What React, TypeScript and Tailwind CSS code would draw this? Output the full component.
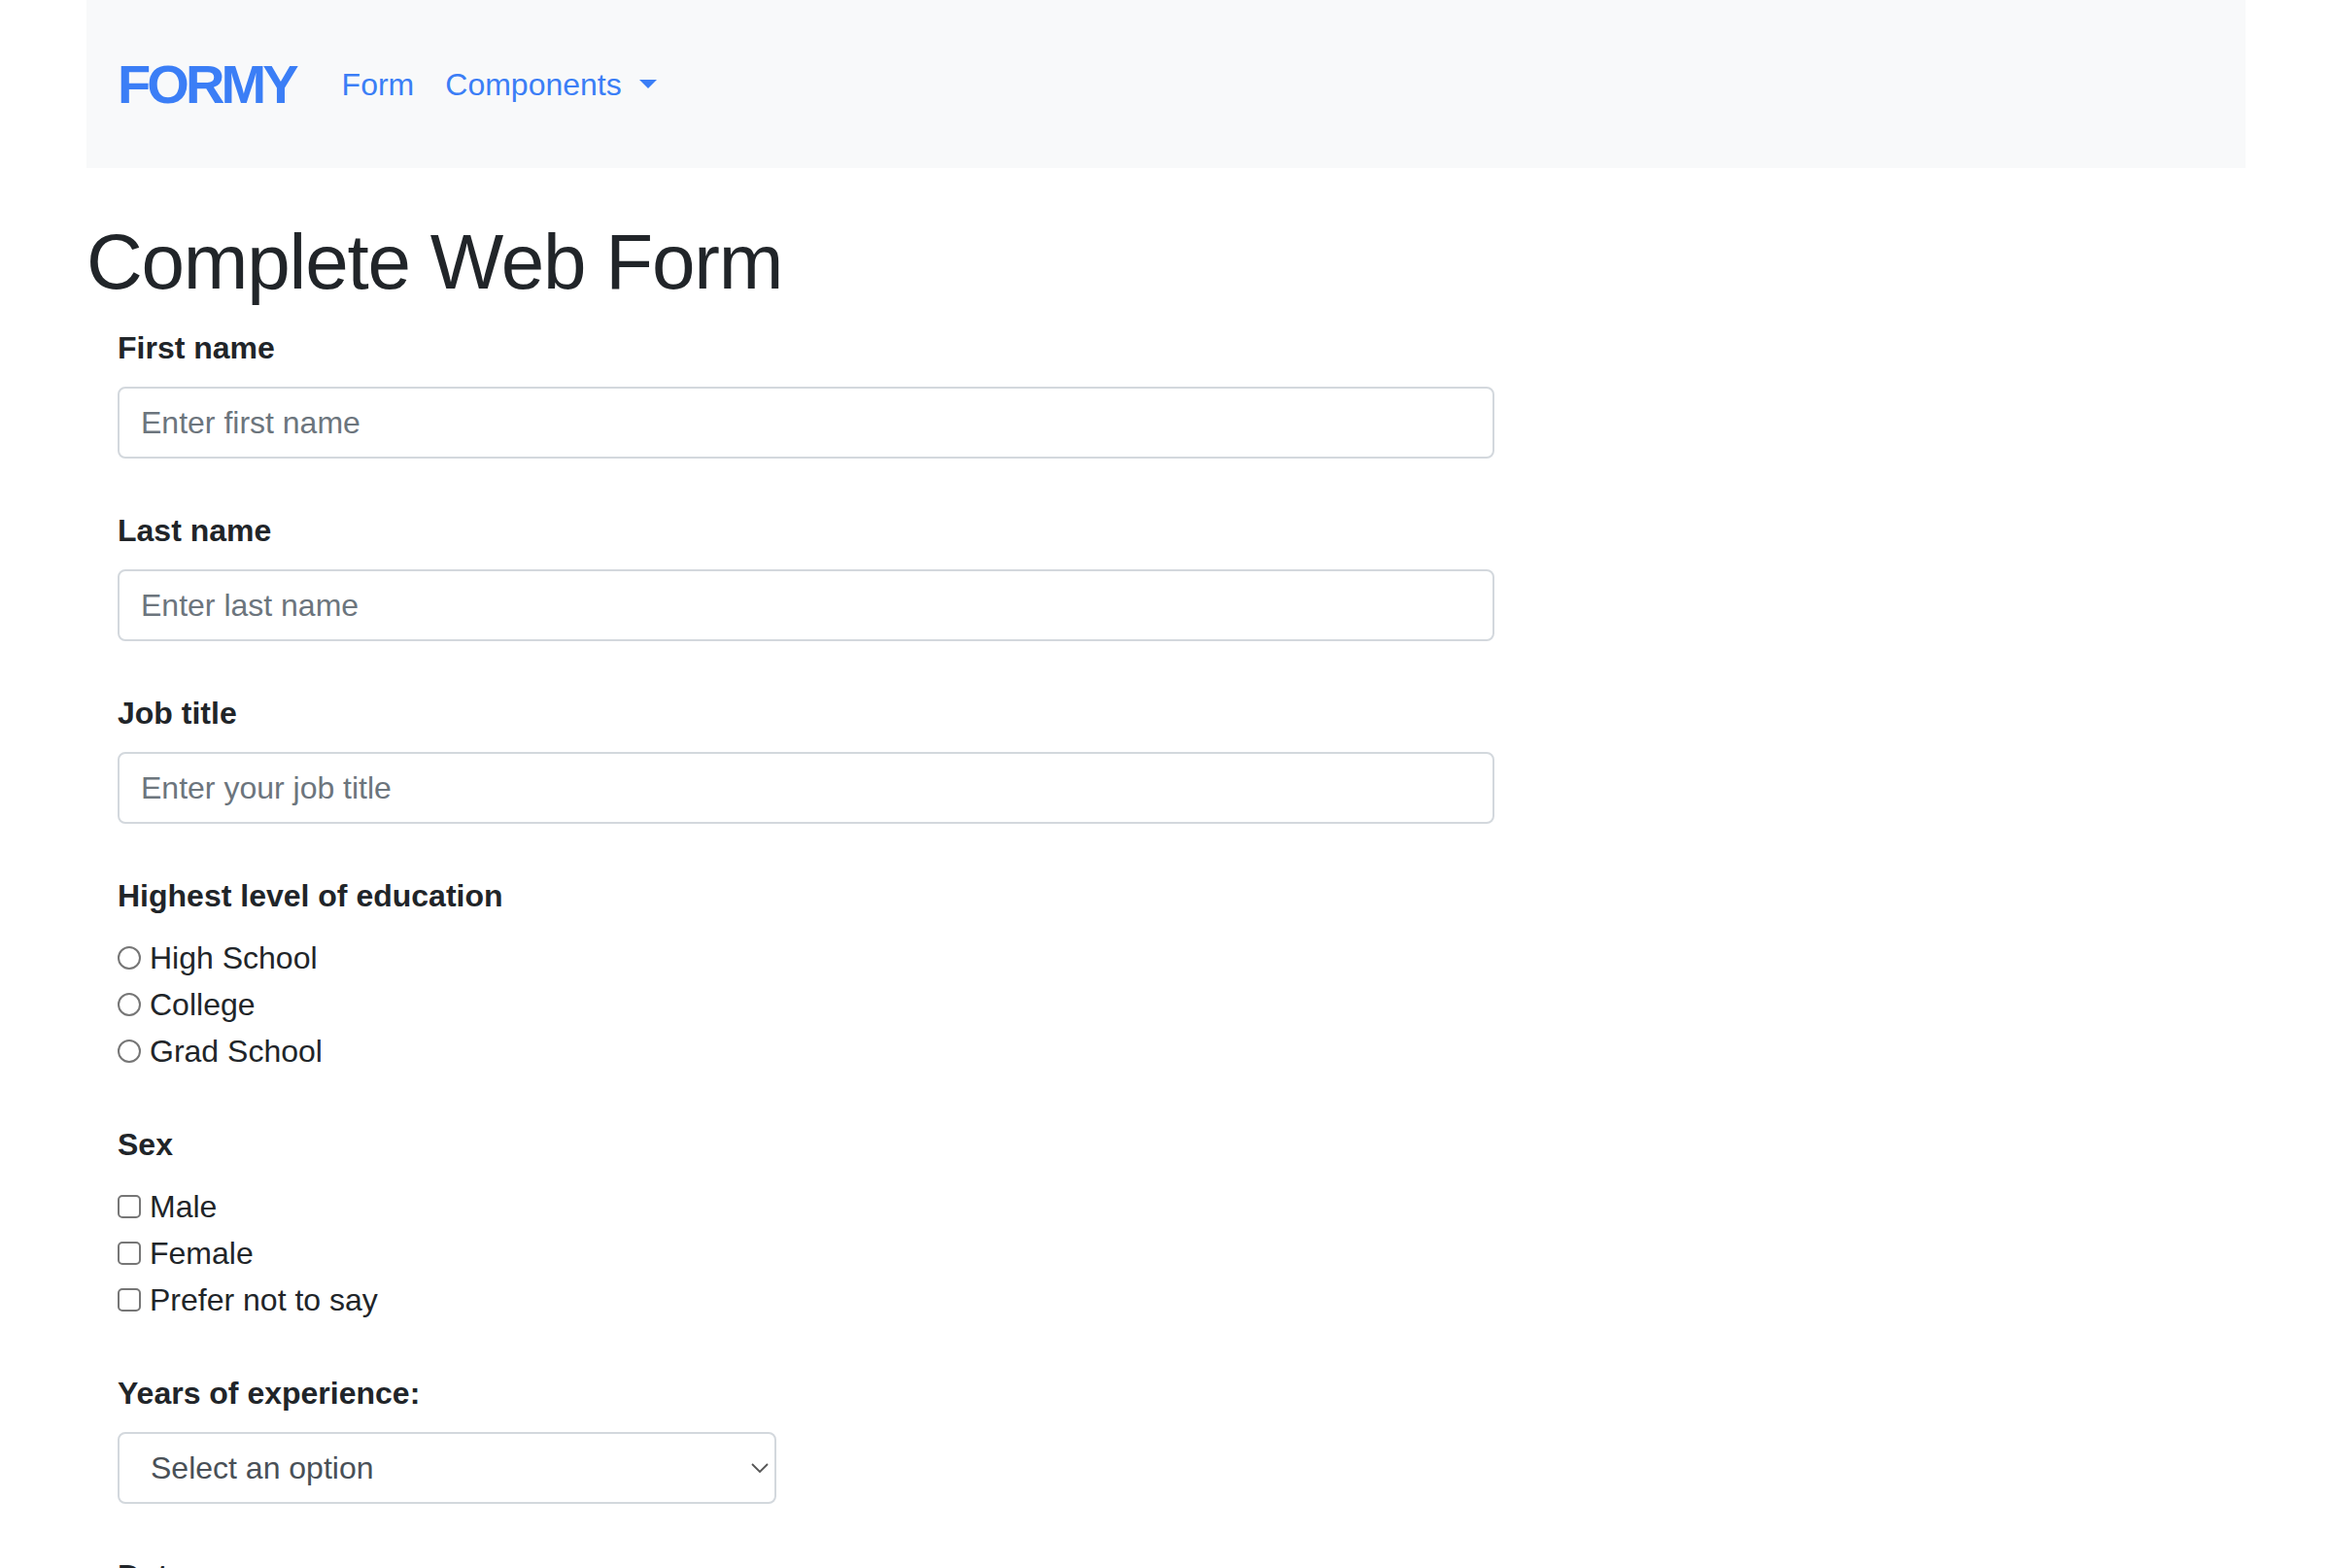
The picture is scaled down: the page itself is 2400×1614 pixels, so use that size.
const textInputs = [
  { id: 'first-name', label: 'First name', placeholder: 'Enter first name' },
  { id: 'last-name', label: 'Last name', placeholder: 'Enter last name' },
  { id: 'job-title', label: 'Job title', placeholder: 'Enter your job title' },
];

const education = ['High School', 'College', 'Grad School'];
const sexOptions = ['Male', 'Female', 'Prefer not to say'];

function Navbar() {
  return (
    <nav className="flex h-[173px] items-center bg-[#f8f9fa] px-[32px]">
      <a className="mr-[32px] text-[56px] font-bold leading-[1.5] tracking-[-0.07em] text-[#3b7ef6]">
        FORMY
      </a>
      <a className="px-[16px] text-[32px] leading-[1.5] text-[#3b7ef6]">Form</a>
      <a className="flex items-center px-[16px] text-[32px] leading-[1.5] text-[#3b7ef6]">
        Components
        <span className="ml-[18px] h-0 w-0 border-x-[9px] border-t-[9px] border-x-transparent border-t-[#3b7ef6]" />
      </a>
    </nav>
  );
}

function Label({ children }: { children: React.ReactNode }) {
  return (
    <label className="mb-[16px] block text-[32px] font-bold leading-[48px] text-[#212529]">
      {children}
    </label>
  );
}

export default function App() {
  return (
    <div className="min-h-screen bg-white px-[89px] font-['Liberation_Sans',Arial,sans-serif] text-[#212529]">
      <Navbar />

      <h1 className="mt-[49px] mb-[16px] text-[80px] font-medium leading-[1.2] tracking-[-0.015em]">
        Complete Web Form
      </h1>

      <form className="pl-[32px]">
        {textInputs.map((field) => (
          <div key={field.id} className="mb-[50px]">
            <Label>{field.label}</Label>
            <input
              id={field.id}
              type="text"
              placeholder={field.placeholder}
              className="block h-[74px] w-[1417px] rounded-[8px] border-2 border-[#d3d8dd] bg-white pl-[22px] text-[32px] text-[#495057] outline-none placeholder:text-[#6c757d]"
            />
          </div>
        ))}

        <div className="mb-[48px]">
          <Label>Highest level of education</Label>
          {education.map((item) => (
            <div key={item} className="flex h-[48px] items-center text-[32px]">
              <span className="h-[24px] w-[24px] rounded-full border-2 border-[#767676] bg-white" />
              <span className="ml-[9px]">{item}</span>
            </div>
          ))}
        </div>

        <div className="mb-[48px]">
          <Label>Sex</Label>
          {sexOptions.map((item) => (
            <div key={item} className="flex h-[48px] items-center text-[32px]">
              <span className="h-[24px] w-[24px] rounded-[5px] border-2 border-[#767676] bg-white" />
              <span className="ml-[9px]">{item}</span>
            </div>
          ))}
        </div>

        <div className="mb-[50px]">
          <Label>Years of experience:</Label>
          <div className="flex h-[74px] w-[678px] items-center justify-between rounded-[8px] border-2 border-[#d3d8dd] bg-white pl-[32px] pr-[6px] text-[32px] text-[#495057]">
            <span>Select an option</span>
            <svg width="18" height="10" viewBox="0 0 18 10" fill="none">
              <path d="M1 1l8 8 8-8" stroke="#555" strokeWidth="1.8" />
            </svg>
          </div>
        </div>

        <div className="mb-[50px]">
          <Label>Date</Label>
          <input
            type="text"
            placeholder="mm/dd/yyyy"
            className="block h-[74px] w-[1417px] rounded-[8px] border-2 border-[#d3d8dd] bg-white pl-[22px] text-[32px] outline-none placeholder:text-[#6c757d]"
          />
        </div>
      </form>
    </div>
  );
}
